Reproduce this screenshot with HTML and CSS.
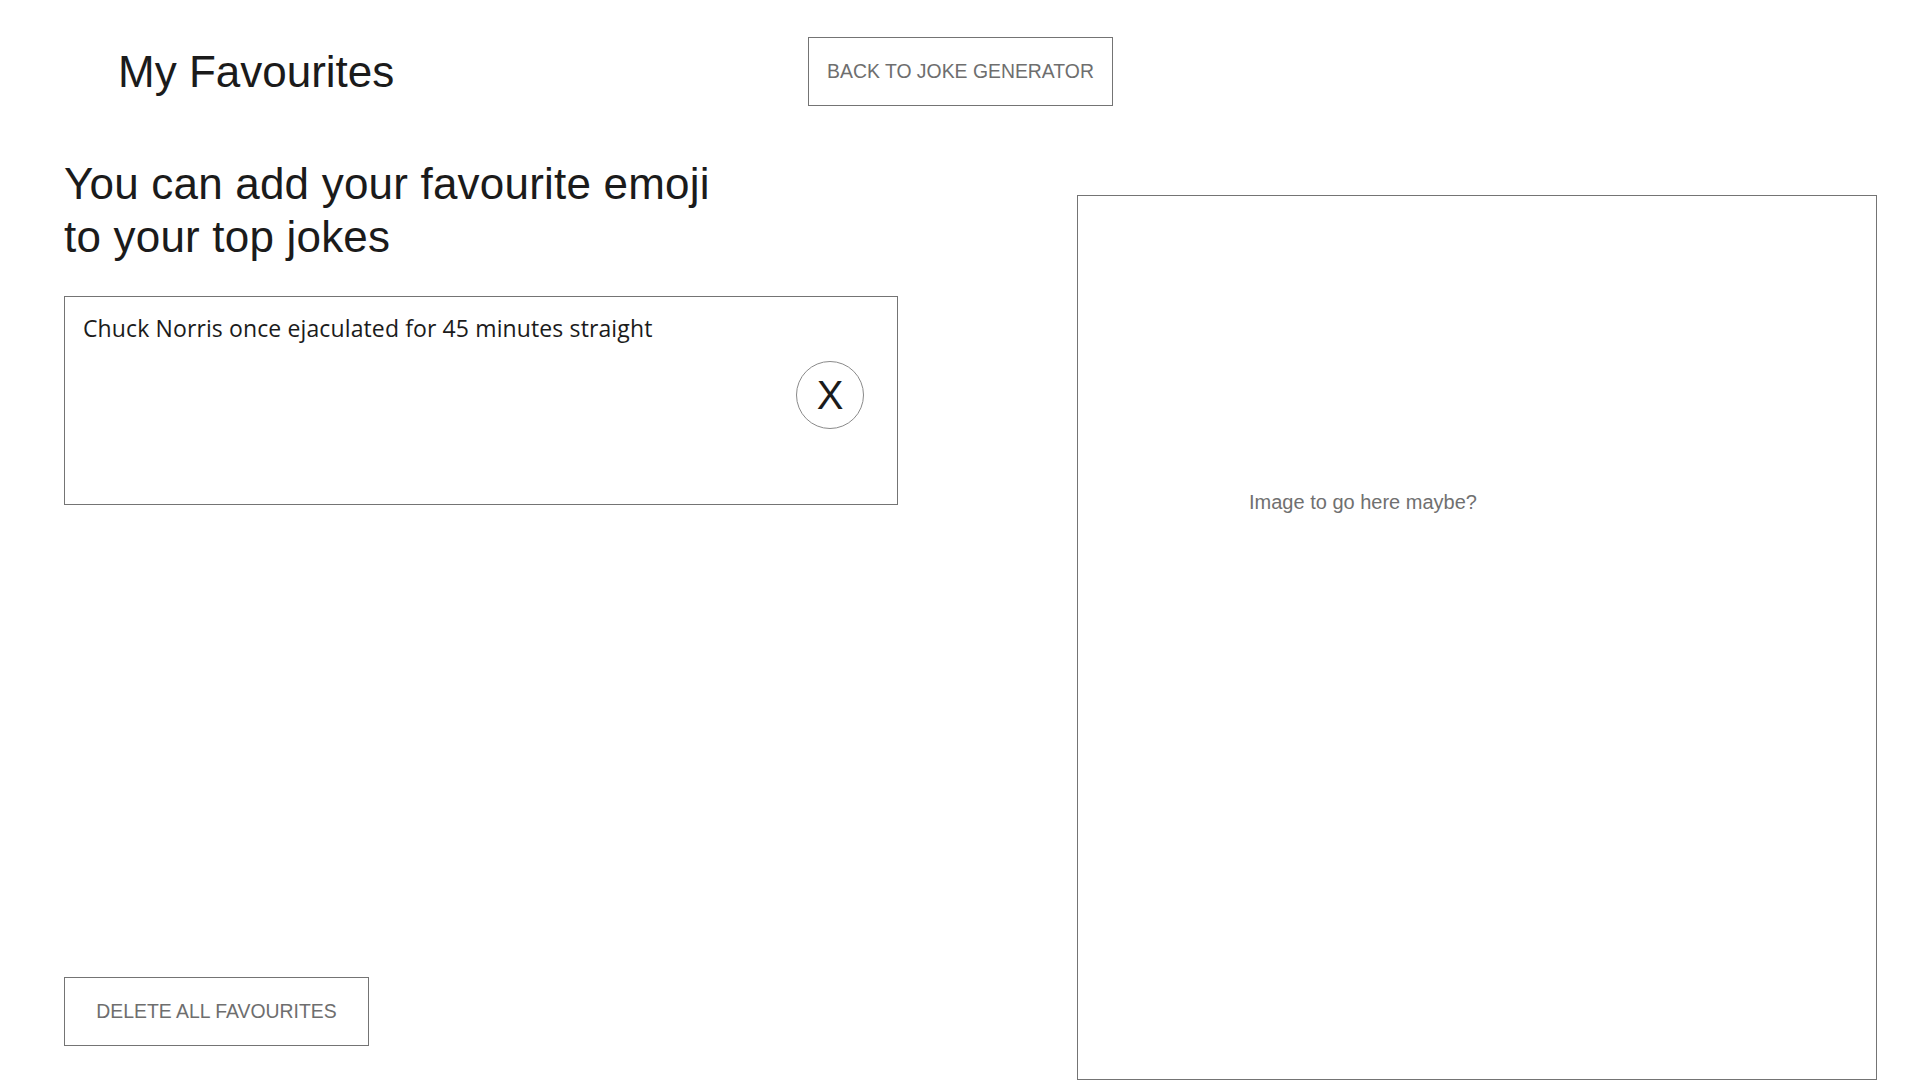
FILE: index.html
```html
<!DOCTYPE html>
<html lang="en">
<head>
<meta charset="utf-8">
<title>My Favourites</title>
<link rel="stylesheet" href="styles.css">
</head>
<body>
<div class="page">
  <header class="topbar">
    <div class="title-cell">
      <h1 class="page-title">My Favourites</h1>
    </div>
    <button class="outline-btn" type="button">BACK TO JOKE GENERATOR</button>
  </header>
  <main class="content">
    <section class="left-col">
      <h2 class="intro">You can add your favourite emoji<br>to your top jokes</h2>
      <div class="joke-card">
        <p class="joke-text">Chuck Norris once ejaculated for 45 minutes straight</p>
        <div class="joke-actions">
          <button class="remove-btn" type="button">X</button>
        </div>
      </div>
      <button class="outline-btn delete-btn" type="button">DELETE ALL FAVOURITES</button>
    </section>
    <section class="image-box">
      <p class="image-note">Image to go here maybe?</p>
    </section>
  </main>
</div>
</body>
</html>
```

FILE: styles.css
```css
* {
  box-sizing: border-box;
}

html, body {
  margin: 0;
  padding: 0;
  background: #ffffff;
  overflow: hidden;
}

body {
  font-family: "Liberation Sans", Arial, sans-serif;
  color: #1b1b1b;
}

.page {
  width: 1920px;
  height: 1080px;
  display: flex;
  flex-direction: column;
}

.topbar {
  display: grid;
  grid-template-columns: 808px auto;
  align-items: center;
  padding-top: 37px;
}

.title-cell {
  padding-left: 118px;
  padding-top: 2px;
}

.page-title {
  margin: 0;
  font-size: 44px;
  font-weight: 400;
  line-height: 52.8px;
  color: #1b1b1b;
}

.outline-btn {
  width: 305px;
  height: 69px;
  padding: 0;
  border: 1px solid #747474;
  background: #ffffff;
  color: #6e6e6e;
  font-family: "Liberation Sans", Arial, sans-serif;
  font-size: 19.4px;
  text-align: center;
  cursor: pointer;
}

.content {
  flex: 1;
  display: grid;
  grid-template-columns: 834px 800px;
  column-gap: 179px;
  padding-left: 64px;
}

.left-col {
  display: flex;
  flex-direction: column;
  align-items: flex-start;
  padding-bottom: 34px;
}

.intro {
  margin: 52px 0 0 0;
  font-size: 44px;
  font-weight: 400;
  line-height: 52.8px;
  letter-spacing: 0.2px;
  color: #1b1b1b;
}

.joke-card {
  margin-top: 32px;
  width: 834px;
  height: 209px;
  border: 1px solid #747474;
  padding: 16px 33px 0 18px;
  display: flex;
  flex-direction: column;
}

.joke-text {
  margin: 0;
  font-family: "Open Sans", "Noto Sans", sans-serif;
  font-size: 23px;
  line-height: 30px;
  letter-spacing: 0.12px;
  color: #1b1b1b;
}

.joke-actions {
  display: flex;
  justify-content: flex-end;
  margin-top: 18px;
}

.remove-btn {
  width: 68px;
  height: 68px;
  border-radius: 50%;
  border: 1px solid #8a8a8a;
  background: #ffffff;
  padding: 0;
  font-family: "Liberation Sans", Arial, sans-serif;
  font-size: 40px;
  line-height: 1;
  color: #1b1b1b;
  display: flex;
  align-items: center;
  justify-content: center;
  cursor: pointer;
}

.delete-btn {
  margin-top: auto;
}

.image-box {
  margin-top: 89px;
  border: 1px solid #747474;
  padding: 295px 0 0 171px;
}

.image-note {
  margin: 0;
  font-size: 20px;
  line-height: 23px;
  color: #707070;
}
```
